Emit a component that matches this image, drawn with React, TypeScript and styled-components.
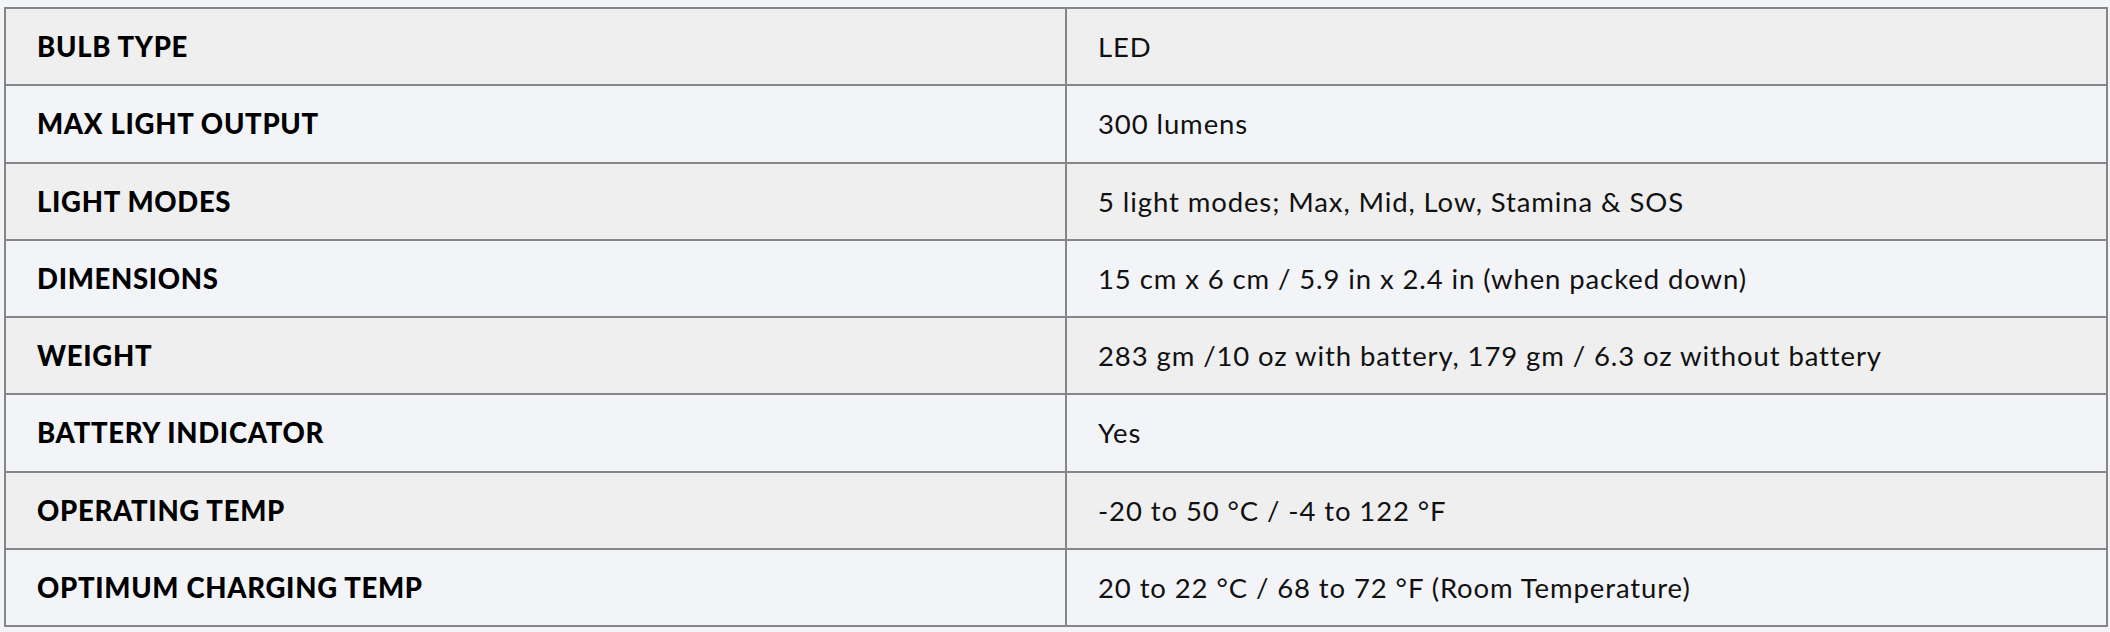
import React from "react";
import styled, { createGlobalStyle } from "styled-components";

const GlobalStyle = createGlobalStyle`
  html, body {
    margin: 0;
    padding: 0;
    background: #f3f4f8;
  }
  body {
    padding: 7px 2px 0 4px;
    font-family: "Lato", "Liberation Sans", sans-serif;
  }
`;

const Table = styled.div`
  display: grid;
  grid-template-columns: 1059px 1039px;
  width: 2104px;
  border: 2px solid #868686;
  box-sizing: border-box;
  background: #868686;
  gap: 2px;
`;

const Cell = styled.div<{ $shade: boolean }>`
  background: ${(p) => (p.$shade ? "#efefef" : "#f3f4f8")};
  height: 75.25px;
  display: flex;
  align-items: center;
  padding-left: 31px;
  box-sizing: border-box;
  white-space: nowrap;
`;

const Label = styled(Cell)`
  font-weight: 900;
  font-size: 27.5px;
  color: #000;
  letter-spacing: 0.7px;
`;

const Value = styled(Cell)`
  font-weight: 400;
  font-size: 27.5px;
  color: #111;
  letter-spacing: 0.9px;
`;

const rows: [string, string][] = [
  ["BULB TYPE", "LED"],
  ["MAX LIGHT OUTPUT", "300 lumens"],
  ["LIGHT MODES", "5 light modes; Max, Mid, Low, Stamina & SOS"],
  ["DIMENSIONS", "15 cm x 6 cm / 5.9 in x 2.4 in (when packed down)"],
  ["WEIGHT", "283 gm /10 oz with battery, 179 gm / 6.3 oz without battery"],
  ["BATTERY INDICATOR", "Yes"],
  ["OPERATING TEMP", "-20 to 50 °C / -4 to 122 °F"],
  ["OPTIMUM CHARGING TEMP", "20 to 22 °C / 68 to 72 °F (Room Temperature)"],
];

export default function App() {
  return (
    <>
      <GlobalStyle />
      <Table>
        {rows.map(([k, v], i) => (
          <React.Fragment key={k}>
            <Label $shade={i % 2 === 0}>{k}</Label>
            <Value $shade={i % 2 === 0}>{v}</Value>
          </React.Fragment>
        ))}
      </Table>
    </>
  );
}
